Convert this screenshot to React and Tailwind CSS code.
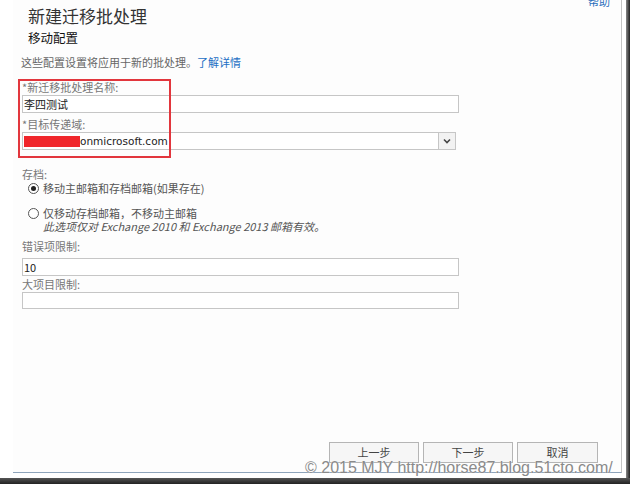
import React from "react";

const font = { fontFamily: '"Noto Sans CJK SC", "Noto Sans", sans-serif' };

function Radio({ checked }) {
  return (
    <span className="w-[11px] h-[11px] rounded-full border border-[#555] bg-white flex items-center justify-center shrink-0">
      {checked && <span className="w-[5px] h-[5px] rounded-full bg-[#222]" />}
    </span>
  );
}

export default function App() {
  return (
    <div className="w-[630px] h-[484px] bg-white overflow-hidden flex flex-col" style={font}>
      <div className="flex h-[478px]">
        <div className="w-[626px] flex">
          <div className="relative ml-[13px] w-[609px] h-[473px] bg-[#fdfdfd] border-r border-b border-r-[#c4c4c4] border-b-[#8ea4bb] flex flex-col">
            <span className="absolute right-[11px] top-[-6px] text-[11px] leading-[14px] text-[#2a6ebb]">帮助</span>

            <div className="pl-[15px] pt-[5px]">
              <div className="text-[17px] leading-[22px] text-[#333]">新建迁移批处理</div>
              <div className="text-[12.5px] leading-[16px] mt-[3px] text-[#111]">移动配置</div>
            </div>

            <div className="pl-[8px] mt-[9px] text-[11px] leading-[14px] text-[#666]">
              这些配置设置将应用于新的批处理。<span className="text-[#1c6fc4]">了解详情</span>
            </div>

            <div className="relative pl-[9px] mt-[11px] flex flex-col">
              <div className="absolute left-[5px] top-[-1px] w-[153px] h-[79px] border-2 border-[#e2363d]" />
              <div className="text-[11px] leading-[14px] text-[#777]">*新迁移批处理名称:</div>
              <div className="mt-[1px] w-[437px] h-[18px] border border-[#c6c6c6] bg-white text-[11px] leading-[16px] text-[#222] pl-[1px]">李四测试</div>
              <div className="mt-[4px] text-[11px] leading-[14px] text-[#777]">*目标传递域:</div>
              <div className="mt-[1px] w-[434px] h-[18px] border border-[#c6c6c6] bg-white flex items-center">
                <span className="ml-[1px] w-[56px] h-[11px] bg-[#f0262b]" />
                <span className="text-[11px] leading-[16px] text-[#222]" style={{ fontFamily: '"DejaVu Sans", sans-serif', fontSize: "10.5px" }}>onmicrosoft.com</span>
                <span className="ml-auto w-[17px] h-[16px] border-l border-[#c6c6c6] bg-[#f2f2f2] flex items-center justify-center">
                  <svg width="8" height="6" viewBox="0 0 8 6"><path d="M1 1.5 L4 4.5 L7 1.5" stroke="#444" strokeWidth="1.6" fill="none" /></svg>
                </span>
              </div>

              <div className="mt-[17px] text-[11px] leading-[14px] text-[#777]">存档:</div>
              <div className="flex items-center gap-[4px] pl-[6px] h-[14px]">
                <Radio checked />
                <span className="text-[11px] leading-[14px] text-[#555]">移动主邮箱和存档邮箱(如果存在)</span>
              </div>
              <div className="mt-[11px] flex items-center gap-[4px] pl-[6px] h-[14px]">
                <Radio />
                <span className="text-[11px] leading-[14px] text-[#555]">仅移动存档邮箱，不移动主邮箱</span>
              </div>
              <div className="pl-[21px] text-[11px] leading-[13px] italic text-[#555]">此选项仅对 Exchange 2010 和 Exchange 2013 邮箱有效。</div>

              <div className="mt-[6px] text-[11px] leading-[14px] text-[#777]">错误项限制:</div>
              <div className="mt-[5px] w-[437px] h-[18px] border border-[#c6c6c6] bg-white text-[11px] leading-[16px] text-[#222] pl-[1px]">10</div>
              <div className="mt-[1px] text-[11px] leading-[14px] text-[#777]">大项目限制:</div>
              <div className="mt-[1px] w-[437px] h-[17px] border border-[#c6c6c6] bg-white" />
            </div>

            <div className="mt-auto mb-[9px] flex justify-end gap-[4px] pr-[23px]">
              <button className="w-[90px] h-[21px] border border-[#b5b5b5] bg-[#f6f6f6] text-[11px] text-[#444]">上一步</button>
              <button className="w-[90px] h-[21px] border border-[#b5b5b5] bg-[#f6f6f6] text-[11px] text-[#444]">下一步</button>
              <button className="w-[81px] h-[21px] border border-[#b5b5b5] bg-[#f6f6f6] text-[11px] text-[#444]">取消</button>
            </div>

            <span
              className="absolute left-[292px] top-[458px] text-[16px] leading-[20px] text-[#8a8a8a] whitespace-nowrap"
              style={{ fontFamily: '"Liberation Sans", Arial, sans-serif', textShadow: "0 0 1px #fff" }}
            >
              © 2015 MJY http://horse87.blog.51cto.com/
            </span>
          </div>
        </div>
        <div className="w-[4px] bg-gradient-to-r from-[#888] to-[#222]" />
      </div>
      <div className="h-[6px] bg-gradient-to-b from-[#555] to-[#222]" />
    </div>
  );
}
